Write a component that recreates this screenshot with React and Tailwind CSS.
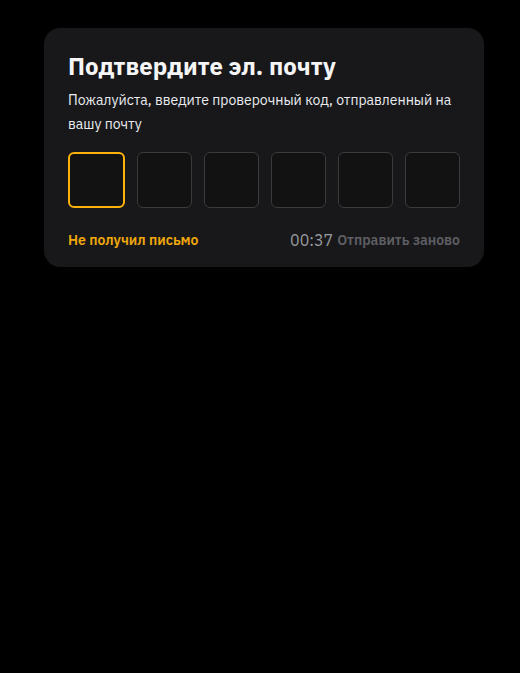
export default function App() {
  const cells = [0, 1, 2, 3, 4, 5];
  return (
    <div className="min-h-[673px] bg-black pt-7" style={{ fontFamily: "'IBM Plex Sans', Roboto, 'Noto Sans', sans-serif" }}>
      <div className="ml-11 w-[440px] rounded-2xl bg-[#18181b] px-6 pt-[22px] pb-[17px]">
        <h1 className="text-[24px] font-bold leading-[32px] text-[#f5f5f5]">Подтвердите эл. почту</h1>
        <p className="mt-[6px] text-[14px] leading-6 text-[#eaecef]">
          Пожалуйста, введите проверочный код, отправленный на вашу почту
        </p>
        {/* поля кода */}
        <div className="mt-4 flex gap-3">
          {cells.map((i) => (
            <div
              key={i}
              className={
                i === 0
                  ? "h-14 flex-1 rounded-md border-2 border-[#fcb20a] bg-[#121212]"
                  : "h-14 flex-1 rounded-md border border-[#3b3b3e] bg-[#121212]"
              }
            />
          ))}
        </div>
        <div className="mt-[22px] flex items-center justify-between text-[14px] leading-5">
          <span className="font-semibold text-[#f0a80b]">Не получил письмо</span>
          <span className="flex items-center gap-1">
            <span className="text-[16px] text-[#9a9a9f]">00:37</span>
            <span className="font-semibold text-[#5e5e63]">Отправить заново</span>
          </span>
        </div>
      </div>
    </div>
  );
}
